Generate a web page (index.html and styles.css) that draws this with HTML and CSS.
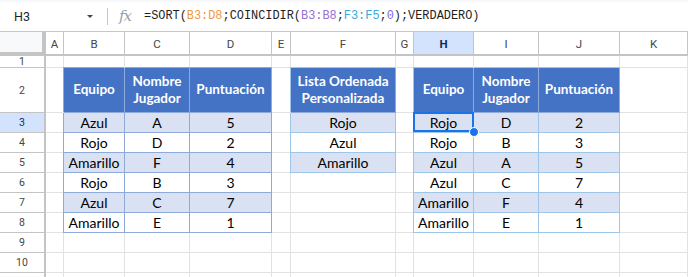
FILE: index.html
```html
<!DOCTYPE html>
<html lang="es">
<head>
<meta charset="utf-8">
<title>Hoja</title>
<link rel="stylesheet" href="styles.css">
</head>
<body>
<div class="app">
  <div class="fbar">
    <div class="namebox"><span class="nb-text">H3</span><span class="caret"></span></div>
    <div class="divider"></div>
    <span class="fx">fx</span>
    <div class="formula">=SORT(<span class="r1">B3:D8</span>;COINCIDIR(<span class="r2">B3:B8</span>;<span class="r3">F3:F5</span>;<span class="num">0</span>);VERDADERO)</div>
  </div>
  <div class="sheet">
    <!-- column headers -->
    <div class="corner"></div>
    <div class="ch">A</div><div class="ch">B</div><div class="ch">C</div><div class="ch">D</div><div class="ch">E</div><div class="ch">F</div><div class="ch">G</div><div class="ch sel">H</div><div class="ch">I</div><div class="ch">J</div><div class="ch">K</div>
    <!-- row 1 -->
    <div class="rh">1</div>
    <div class="c"></div><div class="c"></div><div class="c"></div><div class="c"></div><div class="c"></div><div class="c"></div><div class="c"></div><div class="c"></div><div class="c"></div><div class="c"></div><div class="c"></div>
    <!-- row 2 -->
    <div class="rh">2</div>
    <div class="c"></div>
    <div class="c th ta tl">Equipo</div>
    <div class="c th ta t">Nombre<br>Jugador</div>
    <div class="c th ta t">Puntuación</div>
    <div class="c"></div>
    <div class="c th tb tl">Lista Ordenada<br>Personalizada</div>
    <div class="c"></div>
    <div class="c th tb tl">Equipo</div>
    <div class="c th tb t">Nombre<br>Jugador</div>
    <div class="c th tb t">Puntuación</div>
    <div class="c"></div>
    <!-- row 3 -->
    <div class="rh sel">3</div>
    <div class="c"></div>
    <div class="c td ta band l">Azul</div><div class="c td ta band">A</div><div class="c td ta band">5</div>
    <div class="c"></div>
    <div class="c td tb band l">Rojo</div>
    <div class="c"></div>
    <div class="c td tb band l active">Rojo<div class="selbox"></div><div class="handle"></div></div><div class="c td tb band">D</div><div class="c td tb band">2</div>
    <div class="c"></div>
    <!-- row 4 -->
    <div class="rh">4</div>
    <div class="c"></div>
    <div class="c td ta l">Rojo</div><div class="c td ta">D</div><div class="c td ta">2</div>
    <div class="c"></div>
    <div class="c td tb l">Azul</div>
    <div class="c"></div>
    <div class="c td tb l">Rojo</div><div class="c td tb">B</div><div class="c td tb">3</div>
    <div class="c"></div>
    <!-- row 5 -->
    <div class="rh">5</div>
    <div class="c"></div>
    <div class="c td ta band l">Amarillo</div><div class="c td ta band">F</div><div class="c td ta band">4</div>
    <div class="c"></div>
    <div class="c td tb band l">Amarillo</div>
    <div class="c"></div>
    <div class="c td tb band l">Azul</div><div class="c td tb band">A</div><div class="c td tb band">5</div>
    <div class="c"></div>
    <!-- row 6 -->
    <div class="rh">6</div>
    <div class="c"></div>
    <div class="c td ta l">Rojo</div><div class="c td ta">B</div><div class="c td ta">3</div>
    <div class="c"></div>
    <div class="c"></div>
    <div class="c"></div>
    <div class="c td tb l">Azul</div><div class="c td tb">C</div><div class="c td tb">7</div>
    <div class="c"></div>
    <!-- row 7 -->
    <div class="rh">7</div>
    <div class="c"></div>
    <div class="c td ta band l">Azul</div><div class="c td ta band">C</div><div class="c td ta band">7</div>
    <div class="c"></div>
    <div class="c"></div>
    <div class="c"></div>
    <div class="c td tb band l">Amarillo</div><div class="c td tb band">F</div><div class="c td tb band">4</div>
    <div class="c"></div>
    <!-- row 8 -->
    <div class="rh">8</div>
    <div class="c"></div>
    <div class="c td ta l">Amarillo</div><div class="c td ta">E</div><div class="c td ta">1</div>
    <div class="c"></div>
    <div class="c"></div>
    <div class="c"></div>
    <div class="c td tb l">Amarillo</div><div class="c td tb">E</div><div class="c td tb">1</div>
    <div class="c"></div>
    <!-- row 9 -->
    <div class="rh">9</div>
    <div class="c"></div><div class="c"></div><div class="c"></div><div class="c"></div><div class="c"></div><div class="c"></div><div class="c"></div><div class="c"></div><div class="c"></div><div class="c"></div><div class="c"></div>
    <!-- row 10 -->
    <div class="rh">10</div>
    <div class="c"></div><div class="c"></div><div class="c"></div><div class="c"></div><div class="c"></div><div class="c"></div><div class="c"></div><div class="c"></div><div class="c"></div><div class="c"></div><div class="c"></div>
    <!-- row 11 (partly visible) -->
    <div class="rh"></div>
    <div class="c"></div><div class="c"></div><div class="c"></div><div class="c"></div><div class="c"></div><div class="c"></div><div class="c"></div><div class="c"></div><div class="c"></div><div class="c"></div><div class="c"></div>
  </div>
</div>
</body>
</html>
```

FILE: styles.css
```css
* { box-sizing: border-box; }
html, body {
  margin: 0;
  padding: 0;
  background: #ffffff;
}
body {
  width: 688px;
  height: 277px;
  overflow: hidden;
  font-family: Roboto, "Liberation Sans", sans-serif;
}
.app {
  width: 688px;
  height: 277px;
  overflow: hidden;
}

/* formula bar */
.fbar {
  height: 32px;
  display: flex;
  align-items: center;
  border-top: 2px solid #f6f8fc;
  border-bottom: 1px solid #c7c7c7;
  padding-bottom: 1px;
  white-space: nowrap;
}
.namebox {
  width: 98px;
  padding: 0 5px 0 14px;
  display: flex;
  align-items: center;
  justify-content: space-between;
}
.nb-text {
  font-family: Roboto, sans-serif;
  font-size: 12.5px;
  color: #1f1f1f;
}
.caret {
  width: 0;
  height: 0;
  border-left: 3.5px solid transparent;
  border-right: 3.5px solid transparent;
  border-top: 3.5px solid #444746;
}
.divider {
  width: 1px;
  height: 17px;
  background: #c4c7c5;
  margin-left: 9px;
}
.fx {
  margin-left: 11px;
  font-family: "DejaVu Serif", serif;
  font-style: italic;
  font-size: 15px;
  color: #9aa0a6;
  letter-spacing: -1px;
  width: 14px;
}
.formula {
  margin-left: 11px;
  font-family: "Liberation Mono", monospace;
  font-size: 11.9px;
  color: #1f1f1f;
}
.r1 { color: #f09a3e; }
.r2 { color: #9a6fd1; }
.r3 { color: #38a8d8; }
.num { color: #7d6ce0; }

/* sheet grid */
.sheet {
  display: grid;
  grid-template-columns: 46px 18px 61px 65px 82px 19px 105px 18px 60px 65px 81px 68px;
  grid-template-rows: 24px 12px 45px repeat(9, 20px);
}
.corner {
  border-right: 4px solid #c4c4c4;
  border-bottom: 4px solid #c4c4c4;
  background: #f8f9fa;
}
.ch {
  border-right: 1px solid #c4c4c4;
  border-bottom: 2px solid #c4c4c4;
  display: flex;
  align-items: center;
  justify-content: center;
  font-size: 11.5px;
  color: #444746;
  padding-top: 1px;
}
.ch.sel {
  background: #d3e3fd;
  color: #0b2c66;
  font-weight: 700;
}
.rh {
  border-right: 2px solid #c4c4c4;
  border-bottom: 1px solid #c4c4c4;
  display: flex;
  align-items: center;
  justify-content: center;
  font-size: 10.5px;
  color: #444746;
}
.rh.sel {
  background: #d3e3fd;
  color: #0b2c66;
}
.c {
  border-right: 1px solid #e2e2e2;
  border-bottom: 1px solid #e2e2e2;
  display: flex;
  align-items: center;
  justify-content: center;
  text-align: center;
  font-family: Lato, "Open Sans", sans-serif;
  font-size: 14px;
  color: #000000;
  white-space: nowrap;
}
.ta { border-color: #8eaadb; }
.tb { border-color: #9fc5e8; }
.ta.l { box-shadow: -1px 0 0 #8eaadb; }
.ta.t { box-shadow: 0 -1px 0 #8eaadb; }
.ta.tl { box-shadow: -1px -1px 0 #8eaadb; }
.tb.l { box-shadow: -1px 0 0 #9fc5e8; }
.tb.t { box-shadow: 0 -1px 0 #9fc5e8; }
.tb.tl { box-shadow: -1px -1px 0 #9fc5e8; }
.th {
  background: #4472c4;
  color: #ffffff;
  font-weight: 700;
  font-size: 13.5px;
  line-height: 17.5px;
}
.ta.th, .tb.th {
  border-right-color: #8eaadb;
  border-bottom-color: #8eaadb;
}
.band { background: #d9e1f2; }

/* active cell selection */
.active { position: relative; }
.selbox {
  position: absolute;
  left: -1px;
  top: -1px;
  width: 61px;
  height: 20px;
  border: 2px solid #1a73e8;
  pointer-events: none;
}
.handle {
  position: absolute;
  left: 55px;
  top: 14px;
  width: 10px;
  height: 10px;
  border-radius: 50%;
  background: #1a73e8;
  border: 1px solid #ffffff;
}
```
